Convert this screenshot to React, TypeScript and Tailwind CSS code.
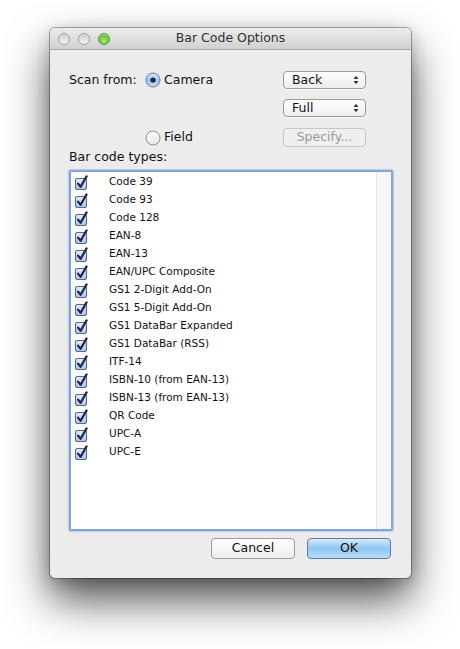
import React from "react";

const items = [
  "Code 39",
  "Code 93",
  "Code 128",
  "EAN-8",
  "EAN-13",
  "EAN/UPC Composite",
  "GS1 2-Digit Add-On",
  "GS1 5-Digit Add-On",
  "GS1 DataBar Expanded",
  "GS1 DataBar (RSS)",
  "ITF-14",
  "ISBN-10 (from EAN-13)",
  "ISBN-13 (from EAN-13)",
  "QR Code",
  "UPC-A",
  "UPC-E",
];

function Check() {
  return (
    <svg width="15" height="15" viewBox="0 0 15 15" className="shrink-0">
      <defs>
        <linearGradient id="cbg" x1="0" y1="0" x2="0" y2="1">
          <stop offset="0" stopColor="#e4eefa" />
          <stop offset="1" stopColor="#a9c6e8" />
        </linearGradient>
      </defs>
      <rect x="1.5" y="3.5" width="11" height="11" rx="2" fill="url(#cbg)" stroke="#56698a" strokeWidth="1.1" />
      <path d="M4 8.6 L6.6 11.8 L12.6 1.4" fill="none" stroke="#1b2740" strokeWidth="2.2" strokeLinecap="round" strokeLinejoin="round" />
    </svg>
  );
}

function Radio({ on }: { on: boolean }) {
  return (
    <svg width="16" height="16" viewBox="0 0 16 16" className="shrink-0">
      <defs>
        <linearGradient id="rOn" x1="0" y1="0" x2="0" y2="1">
          <stop offset="0" stopColor="#d6e8f9" />
          <stop offset="0.5" stopColor="#9cc6ee" />
          <stop offset="1" stopColor="#c3ddf6" />
        </linearGradient>
        <linearGradient id="rOff" x1="0" y1="0" x2="0" y2="1">
          <stop offset="0" stopColor="#ffffff" />
          <stop offset="1" stopColor="#e6e6e6" />
        </linearGradient>
      </defs>
      <circle cx="8" cy="8" r="7" fill={on ? "url(#rOn)" : "url(#rOff)"} stroke={on ? "#5b7ca3" : "#8c8c8c"} strokeWidth="1" />
      {on && <circle cx="8" cy="8" r="2.6" fill="#1c2535" />}
    </svg>
  );
}

function Arrows() {
  return (
    <svg width="6" height="10" viewBox="0 0 6 10" className="shrink-0">
      <path d="M0.5 4 L3 0.8 L5.5 4 Z" fill="#333" />
      <path d="M0.5 6 L3 9.2 L5.5 6 Z" fill="#333" />
    </svg>
  );
}

function Popup({ label }: { label: string }) {
  return (
    <div className="flex h-[18px] w-[83px] items-center justify-between rounded-[4px] border border-[#9a9a9a] bg-gradient-to-b from-[#ffffff] to-[#ededed] pl-[8px] pr-[6px] text-[12.5px] leading-none text-[#111] shadow-[0_1px_0_rgba(255,255,255,0.8)]">
      <span>{label}</span>
      <Arrows />
    </div>
  );
}

function Light({ green }: { green?: boolean }) {
  return green ? (
    <div className="h-[12px] w-[12px] rounded-full border border-[#4f9a34] bg-[radial-gradient(circle_at_50%_70%,#a6ec7c,#5fc23a_60%,#3f9a24)] shadow-[inset_0_1px_1px_rgba(255,255,255,0.6)]" />
  ) : (
    <div className="h-[12px] w-[12px] rounded-full border border-[#a2a2a2] bg-gradient-to-b from-[#cfcfcf] to-[#f4f4f4]" />
  );
}

export default function App() {
  return (
    <div className="h-[649px] w-[460px] bg-white pl-[50px] pt-[28px] font-['DejaVu_Sans',sans-serif]">
      <div className="flex w-[361px] flex-col overflow-hidden rounded-[5px] bg-[#ececec] shadow-[0_0_0_1px_rgba(0,0,0,0.3),0_22px_44px_rgba(0,0,0,0.68),0_4px_16px_rgba(0,0,0,0.2)]">
        {/* title bar */}
        <div className="relative flex h-[22px] items-center border-b border-[#a3a3a3] bg-gradient-to-b from-[#ececec] to-[#d1d1d1] pl-[8px]">
          <div className="flex gap-[8px]">
            <Light />
            <Light />
            <Light green />
          </div>
          <div className="absolute inset-x-0 top-0 flex h-[21px] items-center justify-center text-[12.5px] text-[#2f2f2f]">
            Bar Code Options
          </div>
        </div>

        {/* body */}
        <div className="flex flex-col px-[19px] pb-[19px] pt-[21px] text-[12.5px] text-[#111]">
          <div className="flex h-[18px] items-center">
            <div className="flex w-[214px] items-center">
              <span className="w-[76px]">Scan from:</span>
              <Radio on />
              <span className="ml-[3px]">Camera</span>
            </div>
            <Popup label="Back" />
          </div>
          <div className="mt-[10px] flex h-[18px] items-center">
            <div className="w-[214px]" />
            <Popup label="Full" />
          </div>
          <div className="mt-[11px] flex h-[19px] items-center">
            <div className="flex w-[214px] items-center pl-[76px]">
              <Radio on={false} />
              <span className="ml-[3px]">Field</span>
            </div>
            <div className="flex h-[19px] w-[83px] items-center justify-center rounded-[4px] border border-[#c6c6c6] bg-[#efefef] text-[#9a9a9a]">
              Specify...
            </div>
          </div>
          <div className="mt-[2px] h-[15px] leading-[15px]">Bar code types:</div>

          {/* list */}
          <div className="mt-[6px] flex h-[361px] w-[324px] rounded-[2px] border-2 border-[#7fa7d7] bg-white shadow-[0_0_1px_1px_rgba(127,167,215,0.45)]">
            <div className="flex flex-1 flex-col pt-[1px]">
              {items.map((t) => (
                <div key={t} className="flex h-[18px] items-center pl-[3px]">
                  <Check />
                  <span className="ml-[20px] text-[10.5px] text-[#111]">{t}</span>
                </div>
              ))}
            </div>
            <div className="w-[15px] border-l border-[#e3e3e3] bg-[#f6f6f6]" />
          </div>

          {/* buttons */}
          <div className="mt-[7px] flex justify-end gap-[12px] pr-[1px]">
            <div className="flex h-[21px] w-[84px] items-center justify-center rounded-[4px] border border-[#9b9b9b] bg-gradient-to-b from-[#ffffff] to-[#ececec] text-[#111]">
              Cancel
            </div>
            <div className="flex h-[21px] w-[84px] items-center justify-center rounded-[4px] border border-[#5c7ea6] bg-gradient-to-b from-[#d5e9fb] via-[#8fc6f2] to-[#b7dcf8] text-[#111]">
              OK
            </div>
          </div>
        </div>
      </div>
    </div>
  );
}
